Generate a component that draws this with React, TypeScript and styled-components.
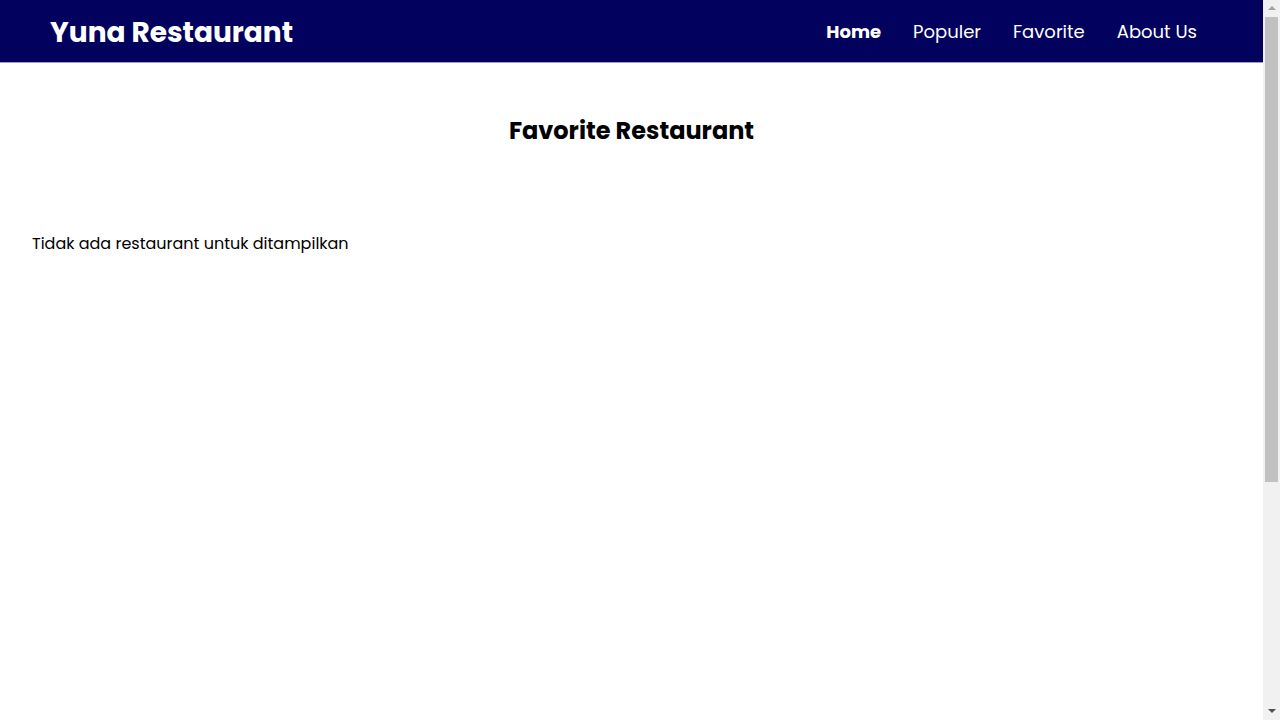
import React from "react";
import styled, { createGlobalStyle } from "styled-components";

const Global = createGlobalStyle`
  * { box-sizing: border-box; }
  html, body { margin: 0; padding: 0; }
  body {
    font-family: "Poppins", "Open Sans", "Noto Sans", sans-serif;
    color: #000;
    background: #fff;
  }
`;

const Page = styled.div`
  margin-right: 17px;
`;

const Header = styled.header`
  height: 62px;
  background: #02015d;
  display: flex;
  align-items: center;
  justify-content: space-between;
  padding: 0 50px;
  border-bottom: 1px solid #9d9dc4;
  box-sizing: content-box;
`;

const Brand = styled.h1`
  margin: 4px 0 0;
  color: #fff;
  font-size: 28px;
  font-weight: 700;
  line-height: 1.2;
`;

const Nav = styled.nav`
  display: flex;
  align-items: center;
`;

const NavLink = styled.a<{ $active?: boolean }>`
  color: #fff;
  text-decoration: none;
  font-size: 18px;
  font-weight: ${(p) => (p.$active ? 700 : 400)};
  padding: 0 16px;
`;

const Main = styled.main`
  min-height: 987px;
  padding: 50px 32px 32px;
`;

const Title = styled.h2`
  margin: 0 0 83px;
  text-align: center;
  font-size: 24px;
  font-weight: 700;
`;

const Empty = styled.p`
  margin: 0;
  font-size: 16px;
`;

const ScrollTrack = styled.div`
  position: fixed;
  top: 0;
  right: 0;
  width: 17px;
  height: 100vh;
  background: #f1f1f1;
  display: flex;
  flex-direction: column;
  align-items: center;
`;

const Arrow = styled.div<{ $down?: boolean }>`
  width: 0;
  height: 0;
  margin: ${(p) => (p.$down ? "auto 0 7px" : "6px 0 0")};
  border-left: 4px solid transparent;
  border-right: 4px solid transparent;
  ${(p) =>
    p.$down
      ? "border-top: 4px solid #505050;"
      : "border-bottom: 4px solid #a3a3a3;"}
`;

const Thumb = styled.div`
  position: absolute;
  top: 17px;
  left: 2px;
  width: 13px;
  height: 465px;
  background: #c1c1c1;
`;

export default function App() {
  return (
    <>
      <Global />
      <Page>
        <Header>
          <Brand>Yuna Restaurant</Brand>
          <Nav>
            <NavLink $active href="#">Home</NavLink>
            <NavLink href="#">Populer</NavLink>
            <NavLink href="#">Favorite</NavLink>
            <NavLink href="#">About Us</NavLink>
          </Nav>
        </Header>
        <Main>
          <Title>Favorite Restaurant</Title>
          <Empty>Tidak ada restaurant untuk ditampilkan</Empty>
        </Main>
      </Page>
      <ScrollTrack aria-hidden="true">
        <Arrow />
        <Thumb />
        <Arrow $down />
      </ScrollTrack>
    </>
  );
}
